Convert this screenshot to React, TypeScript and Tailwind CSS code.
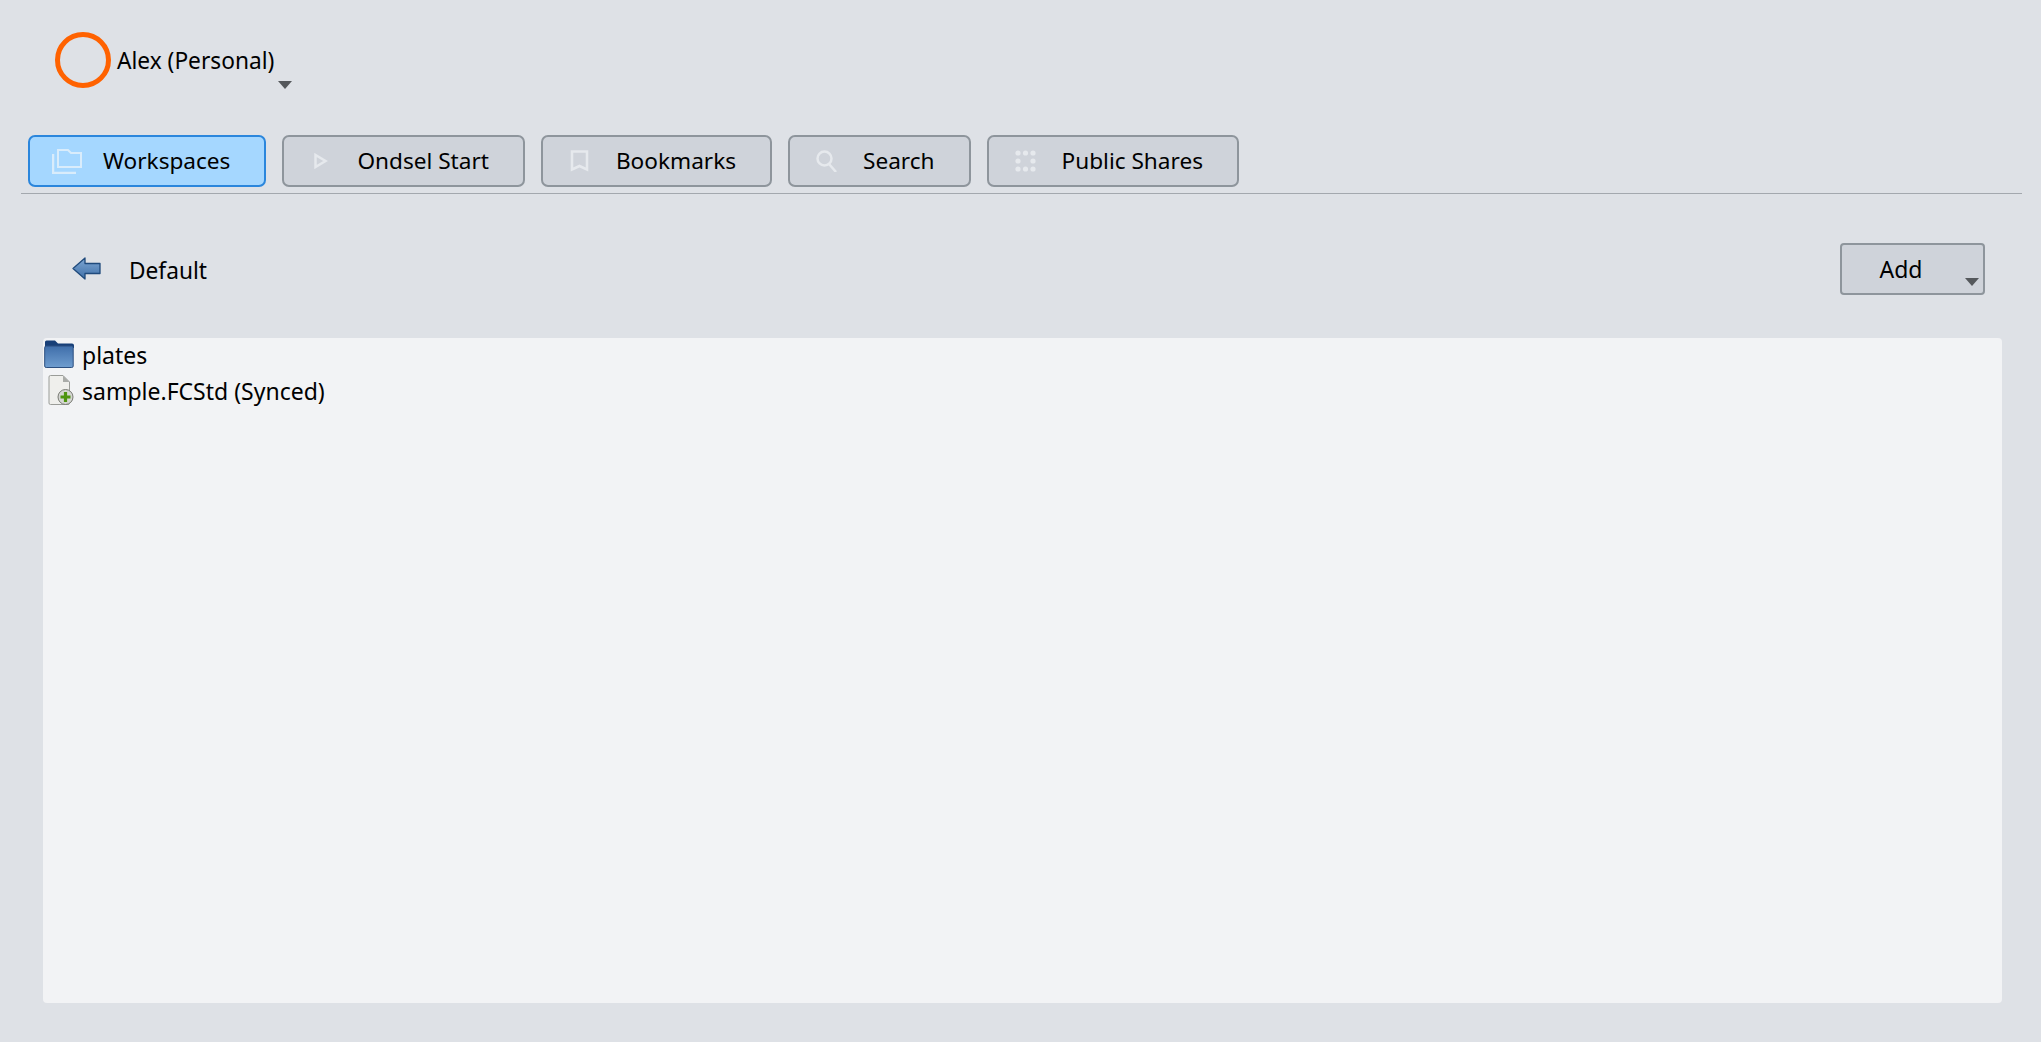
import type { ReactNode } from 'react';

const FolderStackIcon = () => (
  <svg width="30" height="26" viewBox="0 0 30 26" fill="none" stroke="#d9ecfb" strokeWidth="2">
    <path d="M6 19V2h10l3 3h10v14z" />
    <path d="M1 6v19h23" strokeWidth="2.5" />
  </svg>
);

const PlayIcon = () => (
  <svg width="14" height="16" viewBox="0 0 14 16" fill="none" stroke="#e6e9ed" strokeWidth="2.5">
    <path d="M1.5 2v12l10-6z" />
  </svg>
);

const BookmarkIcon = () => (
  <svg width="19" height="22" viewBox="0 0 19 22" fill="none" stroke="#e6e9ed" strokeWidth="2.5">
    <path d="M2 1.5h15v18l-7.5-3.5L2 19.5z" />
  </svg>
);

const SearchIcon = () => (
  <svg width="22" height="22" viewBox="0 0 22 22" fill="none" stroke="#e6e9ed" strokeWidth="2.5">
    <circle cx="8.5" cy="8.5" r="7" />
    <path d="M13 14l7 8" />
  </svg>
);

const GridIcon = () => (
  <svg width="21" height="22" viewBox="0 0 21 22" fill="#e6e9ed">
    {[3, 11, 19].map((cy) =>
      [3, 10.5, 18].map((cx) =>
        cx === 10.5 && cy === 11 ? null : <circle key={`${cx}-${cy}`} cx={cx} cy={cy} r="2.6" />,
      ),
    )}
  </svg>
);

const Caret = () => (
  <svg width="14" height="8" viewBox="0 0 14 8" fill="#55585c">
    <path d="M0 0h14L7 8z" />
  </svg>
);

const BackArrow = () => (
  <svg className="-mt-[3px]" width="29" height="23" viewBox="0 0 29 23">
    <defs>
      <linearGradient id="arrowFill" x1="0" y1="0" x2="0" y2="1">
        <stop offset="0" stopColor="#7ea6d3" />
        <stop offset="1" stopColor="#3f70a8" />
      </linearGradient>
    </defs>
    <path d="M1 11.5L13 1v5.5h15v10H13V22z" fill="url(#arrowFill)" stroke="#1f4a7c" strokeWidth="1.3" strokeLinejoin="round" />
  </svg>
);

const FolderIcon = () => (
  <svg width="30" height="28" viewBox="0 0 30 28">
    <defs>
      <linearGradient id="folderFill" x1="0" y1="0" x2="0" y2="1">
        <stop offset="0" stopColor="#3f6eaa" />
        <stop offset="1" stopColor="#6f9dcf" />
      </linearGradient>
    </defs>
    <path d="M1 2q0-1.500 1.500-1.500h8.500l3 3h14q2 0 2 2V8H1z" fill="#173f78" />
    <rect x="0.700" y="6" width="28.500" height="21.500" rx="1.500" fill="url(#folderFill)" stroke="#2c4f80" strokeWidth="1" />
  </svg>
);

const FileIcon = () => (
  <svg width="26" height="30" viewBox="0 0 26 30">
    <path d="M1 2q0-1.500 1.500-1.500H15L21.500 7v21q0 1.500-1.500 1.500H2.500Q1 29.500 1 28z" fill="#efefec" stroke="#9a9c98" strokeWidth="1" />
    <path d="M15 .5V7h6.500z" fill="#a9aba8" />
    <circle cx="17.500" cy="22" r="7.500" fill="#d5d6d2" stroke="#787a73" strokeWidth="1" />
    <path d="M17.500 17v10M12.500 22h10" stroke="#4f9410" strokeWidth="3.200" />
  </svg>
);

function Tab({ icon, label, active }: { icon: ReactNode; label: string; active?: boolean }) {
  return (
    <button
      className={`flex h-[52px] items-center rounded-[7px] border-2 pl-[22px] pr-[34px] text-[22.600px] text-black ${
        active ? 'border-[#2b86dc] bg-[#a5d7ff]' : 'border-[#8e959c] bg-[#cfd3da]'
      }`}
    >
      <span className="flex w-[30px] justify-center">{icon}</span>
      <span className="ml-[21px]">{label}</span>
    </button>
  );
}

export default function App() {
  return (
    <div className="flex h-[1042px] flex-col bg-[#dee1e6] font-['Noto_Sans',sans-serif] text-[23px] leading-none text-black">
      {/* Account */}
      <div className="flex h-[135px] items-start pl-[55px] pt-[32px]">
        <div className="h-[56px] w-[56px] rounded-full border-[5px] border-[#ff6200]" />
        <span className="ml-[6px] mt-[18px] text-[22.700px]">Alex (Personal)</span>
        <span className="ml-[4px] mt-[49px]">
          <Caret />
        </span>
      </div>

      {/* Tabs */}
      <div className="ml-[21px] mr-[19px] flex gap-[16px] border-b border-[#a3a8ae] pb-[6px] pl-[7px]">
        <Tab active icon={<FolderStackIcon />} label="Workspaces" />
        <Tab icon={<PlayIcon />} label="Ondsel Start" />
        <Tab icon={<BookmarkIcon />} label="Bookmarks" />
        <Tab icon={<SearchIcon />} label="Search" />
        <Tab icon={<GridIcon />} label="Public Shares" />
      </div>

      {/* Path bar */}
      <div className="flex h-[144px] items-start justify-between pl-[72px] pr-[56px] pt-[49px]">
        <div className="flex items-center pt-[15px]">
          <BackArrow />
          <span className="ml-[28px] mt-[2px] text-[22.700px]">Default</span>
        </div>
        <button className="relative h-[52px] w-[145px] rounded-[4px] border-2 border-[#8e959c] bg-[#cfd3da] pr-[23px]">
          Add
          <span className="absolute bottom-[7px] right-[4px] flex">
            <Caret />
          </span>
        </button>
      </div>

      {/* File list */}
      <div className="mb-[39px] ml-[43px] mr-[39px] flex-1 rounded-[4px] bg-[#f2f3f5] pl-[1px]">
        <div className="flex h-[35px] items-center">
          <span className="-mt-[3px] flex">
            <FolderIcon />
          </span>
          <span className="ml-[8px]">plates</span>
        </div>
        <div className="flex h-[37px] items-center">
          <span className="-mt-[3px] ml-[4px] flex">
            <FileIcon />
          </span>
          <span className="ml-[8px]">sample.FCStd (Synced)</span>
        </div>
      </div>
    </div>
  );
}
